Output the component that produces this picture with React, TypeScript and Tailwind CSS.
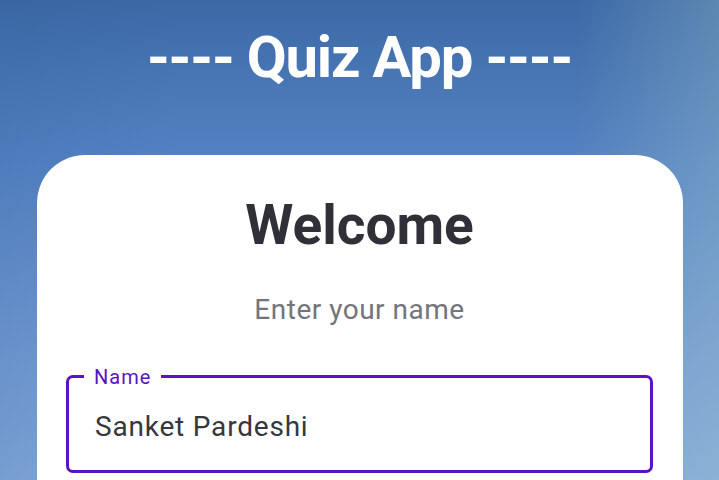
export default function App() {
  return (
    <div className="w-[719px] h-[480px] overflow-hidden bg-[linear-gradient(90deg,rgba(40,90,150,0.15)_0%,rgba(0,0,0,0)_25%,rgba(0,0,0,0)_80%,rgba(150,190,200,0.35)_100%),linear-gradient(180deg,#3c69a6_0%,#5683c3_35%,#7199d2_70%,#85aadb_100%)] font-['Roboto',sans-serif]">
      <div className="flex flex-col items-center">
        <h1 className="mt-[19px] text-[58px] leading-[76px] font-bold text-white tracking-[-1.2px]">---- Quiz App ----</h1>
        <div className="mt-[60px] w-[646px] h-[400px] bg-white rounded-t-[48px] flex flex-col items-center">
          <h2 className="mt-[36px] text-[55px] leading-[68px] font-bold text-[#2f3038]">Welcome</h2>
          <p className="mt-[34px] text-[28px] leading-[34px] tracking-[0.5px] text-[#74757c]">Enter your name</p>
          <div className="relative mt-[48px] w-[587px] h-[98px] border-[3px] border-[#5a12c5] rounded-[7px] pt-[32px] pl-[26px]">
            <span className="absolute -top-[13px] left-[15px] px-[10px] bg-white text-[20px] leading-[24px] tracking-[1px] text-[#5a12c5]">Name</span>
            <span className="block text-[28px] leading-[34px] tracking-[0.8px] text-[#36373d]">Sanket Pardeshi</span>
          </div>
        </div>
      </div>
    </div>
  );
}
